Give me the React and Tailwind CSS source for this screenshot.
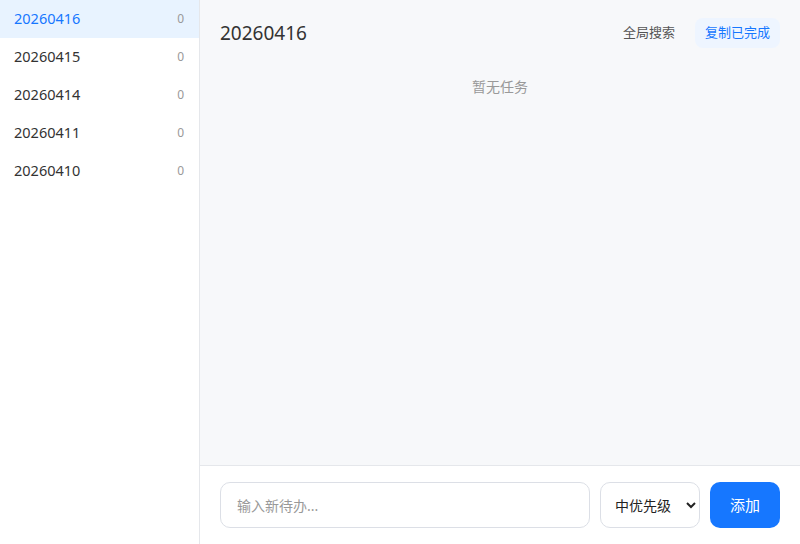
import { useState } from "react";

const dates = ["20260416", "20260415", "20260414", "20260411", "20260410"];

function App() {
  const [active, setActive] = useState("20260416");
  const [text, setText] = useState("");
  const [priority, setPriority] = useState("medium");

  return (
    <div
      className="flex h-[544px] w-[800px] overflow-hidden bg-white text-[#333]"
      style={{ fontFamily: '"Noto Sans", "Noto Sans CJK SC", sans-serif' }}
    >
      {/* Sidebar */}
      <div className="w-[200px] shrink-0 border-r border-[#e5e7eb] bg-white">
        {dates.map((d) => (
          <div
            key={d}
            onClick={() => setActive(d)}
            className={
              active === d
                ? "flex h-[38px] cursor-pointer items-center justify-between bg-[#e8f3ff] pb-[1px] pl-[14px] pr-[15px] text-[#1677ff]"
                : "flex h-[38px] cursor-pointer items-center justify-between pb-[1px] pl-[14px] pr-[15px] text-[#333]"
            }
          >
            <span className="text-[14.5px]">{d}</span>
            <span className="text-[12px] text-[#999]">0</span>
          </div>
        ))}
      </div>

      {/* Main */}
      <div className="flex flex-1 flex-col bg-[#f7f8fa]">
        <div className="flex-1 px-5">
          <div className="flex h-[66px] items-center justify-between">
            <h1 className="text-[19px] text-[#333]">{active}</h1>
            <div className="flex items-center gap-2">
              <button className="rounded-lg px-3 py-[5px] text-[13px] text-[#555]">
                全局搜索
              </button>
              <button className="rounded-lg bg-[#eef5ff] px-[10px] py-[5px] text-[13px] text-[#1677ff]">
                复制已完成
              </button>
            </div>
          </div>
          <p className="mt-[10px] text-center text-[14px] text-[#999]">
            暂无任务
          </p>
        </div>

        <div className="flex h-[79px] items-center gap-[10px] border-t border-[#e5e7eb] bg-white px-5">
          <input
            value={text}
            onChange={(e) => setText(e.target.value)}
            placeholder="输入新待办..."
            className="h-[46px] flex-1 rounded-[10px] border border-[#dcdfe6] px-4 text-[14px] outline-none placeholder:text-[#999]"
          />
          <select
            value={priority}
            onChange={(e) => setPriority(e.target.value)}
            className="h-[46px] w-[100px] rounded-[10px] border border-[#dcdfe6] bg-white pl-[10px] text-[14px] text-[#222]"
          >
            <option value="high">高优先级</option>
            <option value="medium">中优先级</option>
            <option value="low">低优先级</option>
          </select>
          <button className="h-[46px] w-[70px] rounded-[10px] bg-[#1677ff] text-[15px] text-white">
            添加
          </button>
        </div>
      </div>
    </div>
  );
}

export default App;
